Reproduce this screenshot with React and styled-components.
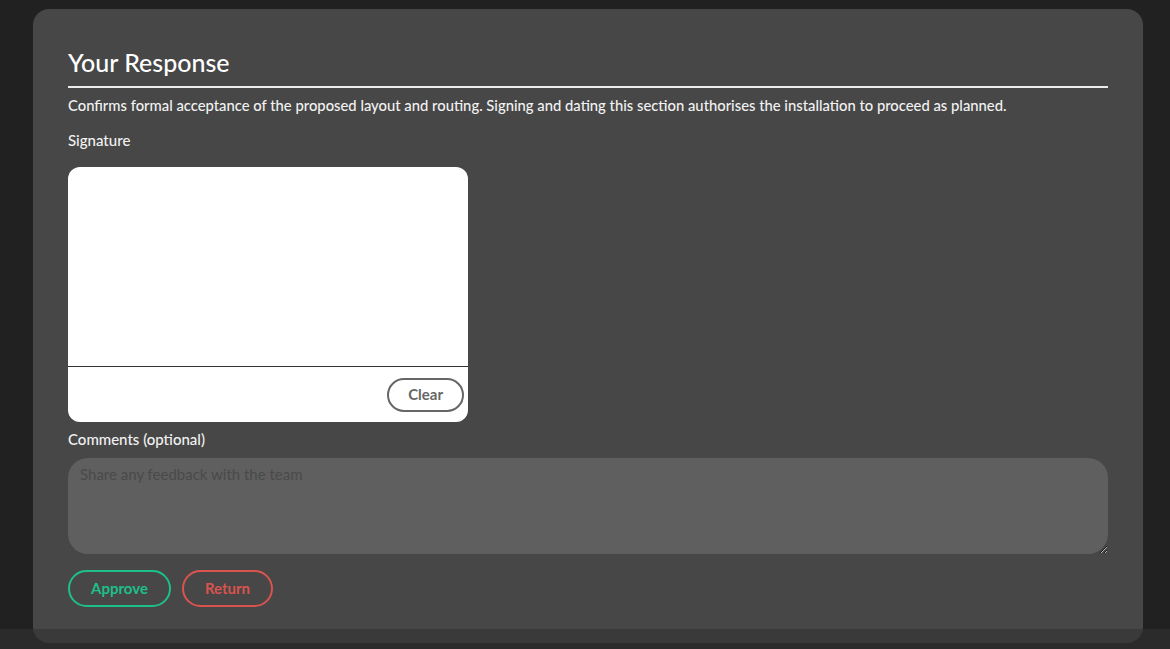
import React from 'react'
import styled, { createGlobalStyle } from 'styled-components'

const Global = createGlobalStyle`
  html, body {
    margin: 0;
    padding: 0;
    background: #212121;
    font-family: Lato, "Noto Sans", sans-serif;
    color: #f2f2f2;
  }
  * { box-sizing: border-box; }
`;

const Page = styled.div`
  min-height: 649px;
  padding: 9px 0 0 33px;
`;

const Card = styled.section`
  width: 1110px;
  background: #474747;
  border-radius: 16px;
  padding: 39px 35px 36px;
  display: flex;
  flex-direction: column;
`;

const Title = styled.h2`
  margin: 0;
  font-size: 25px;
  font-weight: 500;
  line-height: 28px;
  padding-bottom: 10px;
  border-bottom: 2px solid #ececec;
  color: #fff;
`;

const Intro = styled.p`
  margin: 7px 0 0;
  font-size: 14.8px;
  line-height: 20px;
  font-weight: 500;
`;

const Label = styled.label`
  display: block;
  margin-top: ${p => p.$top}px;
  font-size: 15px;
  line-height: 20px;
  font-weight: 500;
`;

const Pad = styled.div`
  margin-top: 17px;
  width: 400px;
  height: 255px;
  background: #fff;
  border-radius: 12px;
  display: flex;
  flex-direction: column;
  overflow: hidden;
`;

const Canvas = styled.div`
  height: 200px;
  border-bottom: 1px solid #333;
`;

const PadFooter = styled.div`
  flex: 1;
  display: flex;
  justify-content: flex-end;
  align-items: center;
  padding-right: 4px;
`;

const PillButton = styled.button`
  height: ${p => p.$h || 37}px;
  padding: 0 ${p => p.$px || 20}px 1px;
  border-radius: 999px;
  border: 2px solid ${p => p.$color};
  background: transparent;
  color: ${p => p.$color};
  font-family: inherit;
  font-size: 15px;
  font-weight: 700;
  cursor: pointer;
`;

const Comments = styled.textarea`
  margin-top: 9px;
  width: 100%;
  height: 96px;
  border: none;
  border-radius: 20px;
  background: #5f5f5f;
  padding: 7px 12px;
  font-family: inherit;
  font-size: 15px;
  color: #fff;
  resize: vertical;
  outline: none;
  &::placeholder { color: #4a4a4a; }
`;

const Actions = styled.div`
  margin-top: 16px;
  display: flex;
  gap: 11px;
`;

const BottomShade = styled.div`
  position: fixed;
  left: 0;
  right: 0;
  bottom: 0;
  height: 20px;
  background: rgba(50, 50, 50, 0.6);
`;

export default function App() {
  return (
    <Page>
      <Global />
      <Card>
        <Title>Your Response</Title>
        <Intro>
          Confirms formal acceptance of the proposed layout and routing. Signing and dating this section authorises the installation to proceed as planned.
        </Intro>
        <Label $top={15}>Signature</Label>
        <Pad>
          <Canvas />
          <PadFooter>
            <PillButton $color="#666" $h={34} $px={19}>Clear</PillButton>
          </PadFooter>
        </Pad>
        <Label $top={7}>Comments (optional)</Label>
        <Comments placeholder="Share any feedback with the team" />
        <Actions>
          <PillButton $color="#1dbf8a" $px={21}>Approve</PillButton>
          <PillButton $color="#d9534f" $px={21}>Return</PillButton>
        </Actions>
      </Card>
      <BottomShade />
    </Page>
  )
}
